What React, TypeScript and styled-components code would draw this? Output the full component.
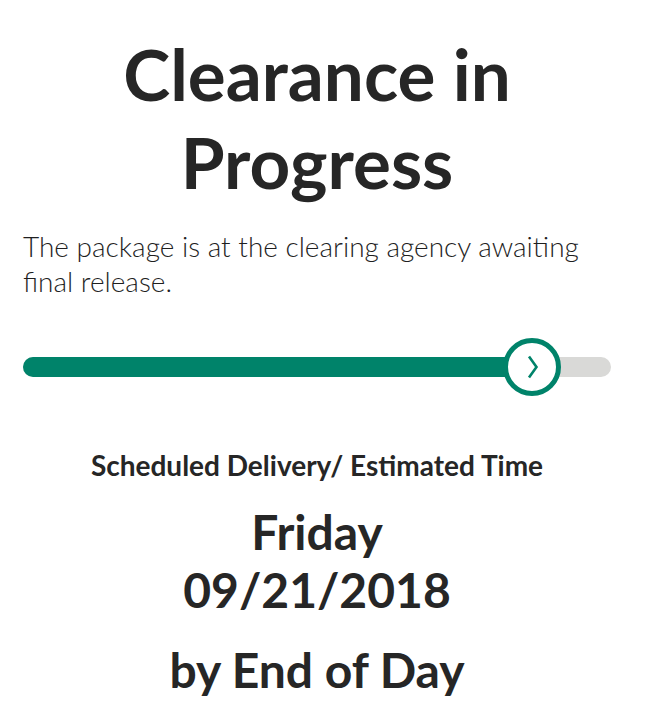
import React from "react";
import styled, { createGlobalStyle } from "styled-components";

const GlobalStyle = createGlobalStyle`
  html, body {
    margin: 0;
    padding: 0;
    background: #ffffff;
  }
  body {
    font-family: Lato, "Open Sans", "Liberation Sans", sans-serif;
    color: #262626;
  }
`;

const Page = styled.main`
  display: flex;
  flex-direction: column;
  padding: 30px 35px 0 23px;
`;

const Title = styled.h1`
  margin: 0;
  font-size: 71px;
  line-height: 88px;
  font-weight: 700;
  text-align: center;
  color: #262626;
`;

const Description = styled.p`
  margin: 23px 0 0;
  font-size: 28px;
  line-height: 35px;
  font-weight: 300;
  color: #1f1f1f;
`;

const Track = styled.div`
  position: relative;
  margin-top: 58px;
  height: 20px;
  border-radius: 10px;
  background: #d9d9d7;
`;

const Fill = styled.div`
  height: 100%;
  border-radius: 10px;
  background: #00836a;
`;

const Knob = styled.div`
  position: absolute;
  top: 50%;
  width: 48px;
  height: 48px;
  transform: translate(-50%, -50%);
  border: 5px solid #00836a;
  border-radius: 50%;
  background: #ffffff;
  display: flex;
  align-items: center;
  justify-content: center;
`;

const Label = styled.div`
  margin-top: 71px;
  font-size: 28px;
  line-height: 34px;
  font-weight: 700;
  text-align: center;
  color: #262626;
`;

const DateBlock = styled.div`
  margin-top: 21px;
  font-size: 48px;
  line-height: 58px;
  font-weight: 700;
  text-align: center;
  color: #262626;
`;

const Deadline = styled.div`
  margin-top: 22px;
  font-size: 48px;
  line-height: 58px;
  font-weight: 700;
  text-align: center;
  color: #262626;
`;

const progress = 86.5;

export default function App() {
  return (
    <>
      <GlobalStyle />
      <Page>
        <Title>
          Clearance in
          <br />
          Progress
        </Title>
        <Description>
          The package is at the clearing agency awaiting final release.
        </Description>
        <Track>
          <Fill style={{ width: `${progress}%` }} />
          <Knob style={{ left: `${progress}%` }}>
            <svg width="16" height="24" viewBox="0 0 16 24" fill="none">
              <path
                d="M5 1.5 L12.5 12 L5 22.5"
                stroke="#00836a"
                strokeWidth="2.6"
                strokeLinecap="butt"
                strokeLinejoin="miter"
              />
            </svg>
          </Knob>
        </Track>
        <Label>Scheduled Delivery/ Estimated Time</Label>
        <DateBlock>
          Friday
          <br />
          09/21/2018
        </DateBlock>
        <Deadline>by End of Day</Deadline>
      </Page>
    </>
  );
}
